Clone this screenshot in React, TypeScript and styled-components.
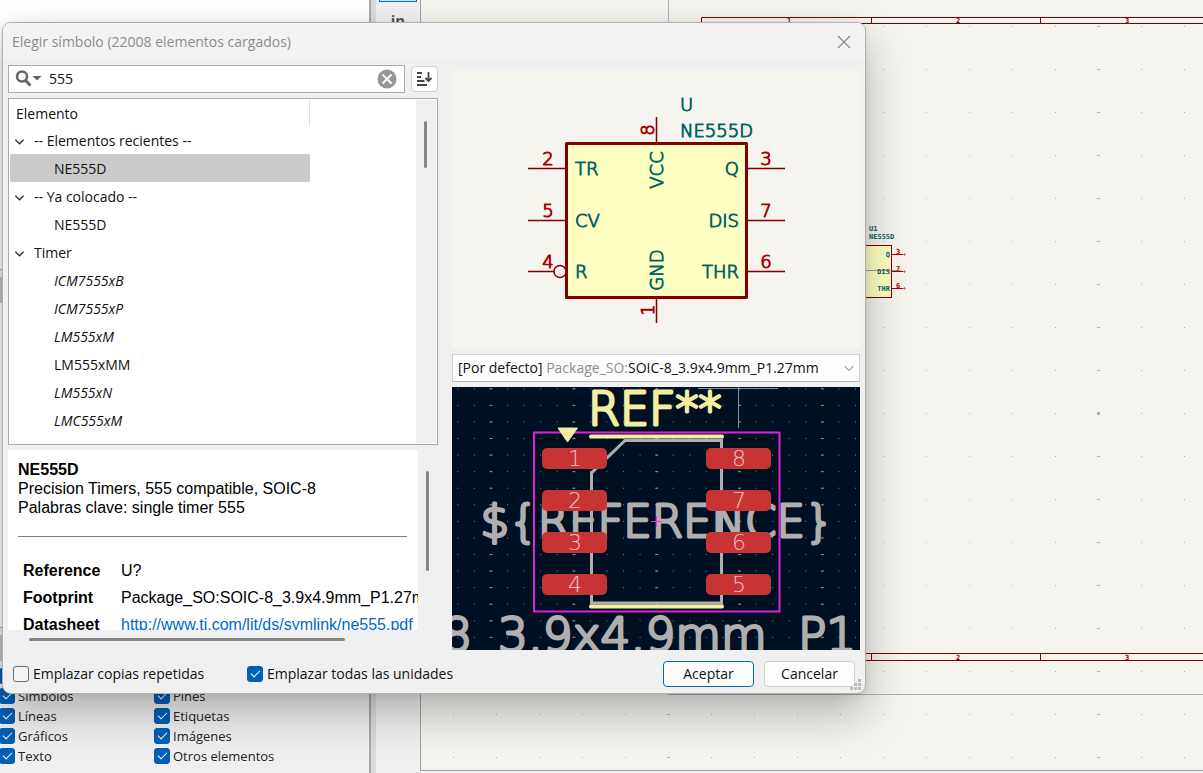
import React from "react";
import styled, { createGlobalStyle, css } from "styled-components";

const UI_FONT = '"Open Sans", "Noto Sans", sans-serif';
const STROKE_FONT = '"DejaVu Sans Light", "DejaVu Sans", sans-serif';

const GlobalStyle = createGlobalStyle`
  *, *::before, *::after { box-sizing: border-box; }
  body {
    margin: 0;
    overflow: hidden;
    background: #f0f0f0;
    font-family: ${UI_FONT};
    font-size: 14px;
    line-height: 20px;
    color: #111;
  }
  button, input, select { font: inherit; color: inherit; }
`;

/* ---------- Editor behind the dialog ---------- */

const Editor = styled.main`
  display: grid;
  grid-template-columns: 369px 7px 45px minmax(0, 1fr);
  height: 100vh;
`;

const SidePanel = styled.aside`
  display: flex;
  flex-direction: column;
  background: #f0f0f0;
`;

const PanelList = styled.div<{ $grow: number }>`
  flex: ${(p) => p.$grow} 1 0;
  background: #fff;
  border-bottom: 1px solid #a8a8a8;
`;

const PanelHeader = styled.div`
  height: 26px;
  margin-top: 7px;
  background: #c4c4c4;
`;

const FilterGrid = styled.div`
  display: grid;
  grid-template-columns: 155px 1fr;
  padding: 5px 0 7px;
  font-size: 13px;
`;

const FilterLabel = styled.label`
  display: flex;
  align-items: center;
  gap: 3px;
  height: 20px;
  margin-left: -1px;
  color: #222;
`;

const CheckBox = styled.input.attrs({ type: "checkbox" })`
  appearance: none;
  flex: none;
  width: 16px;
  height: 16px;
  margin: 0;
  border: 1px solid #6b6b6b;
  border-radius: 3px;
  background: #f5f5f5;

  &:checked {
    border-color: #005fb8;
    background: #005fb8;
  }

  &:checked::after {
    content: "";
    display: block;
    width: 9px;
    height: 5px;
    margin: 3px 0 0 3px;
    border: solid #fff;
    border-width: 0 0 1px 1px;
    transform: rotate(-45deg);
  }
`;

const Sash = styled.div`
  border-left: 2px solid #a9a9a9;
  background: #dcdcdc;
`;

const Toolbar = styled.div`
  display: flex;
  flex-direction: column;
  align-items: center;
  padding: 0 3px;
  border-right: 1px solid #a0a0a0;
  margin-bottom: 2px;
`;

const ToolButton = styled.button<{ $active?: boolean }>`
  width: 38px;
  height: ${(p) => (p.$active ? 2 : 28)}px;
  padding: 0;
  border: 0 solid #0078d4;
  background: transparent;
  font-size: 15px;
  font-weight: 700;
  color: #555;
  ${(p) =>
    p.$active
      ? css`
          border-width: 0 1px 1px;
          background: #cce4f7;
        `
      : css`
          margin-top: 4px;
        `}
`;

const Sheet = styled.svg`
  display: block;
  width: 100%;
  height: calc(100vh - 2px);
  background: #f5f4ef;
  border-bottom: 1px solid #a0a0a0;
`;

/* ---------- Dialog ---------- */

const Dialog = styled.section`
  position: absolute;
  top: 22px;
  left: 2px;
  display: flex;
  flex-direction: column;
  width: min(864px, calc(100vw - 4px));
  border: 1px solid #b0b0ae;
  border-radius: 9px;
  background: #f0f0f0;
  box-shadow: 0 20px 44px rgba(0, 0, 0, 0.27), 0 1px 8px rgba(0, 0, 0, 0.08);
`;

const TitleBar = styled.header`
  display: flex;
  align-items: center;
  justify-content: space-between;
  height: 37px;
  padding: 0 14px 0 9px;
  border-radius: 8px 8px 0 0;
  background: #f3f3f3;
`;

const Title = styled.h1`
  margin: 0;
  font-size: 14px;
  font-weight: 400;
  color: #8c8c8c;
`;

const PlainButton = styled.button`
  display: flex;
  padding: 0;
  border: 0;
  background: transparent;
`;

const Body = styled.div`
  display: grid;
  grid-template-columns: 430px minmax(0, 1fr);
  gap: 14px;
  padding: 5px 5px 0;
`;

const LeftColumn = styled.div`
  display: flex;
  flex-direction: column;
`;

const RightColumn = styled.div`
  display: flex;
  flex-direction: column;
  gap: 5px;
  padding-top: 5px;
`;

const SearchRow = styled.div`
  display: flex;
  align-items: center;
  gap: 6px;
`;

const SearchBox = styled.div`
  display: flex;
  flex: 1;
  align-items: center;
  height: 28px;
  padding: 0 7px 0 6px;
  border: 1px solid #a9a9b0;
  background: #fff;
`;

const SearchInput = styled.input`
  flex: 1;
  min-width: 0;
  margin: 0 8px 0 7px;
  padding: 0;
  border: 0;
  outline: 0;
  background: transparent;
`;

const SortButton = styled.button`
  display: flex;
  align-items: center;
  justify-content: center;
  width: 27px;
  height: 26px;
  padding: 0;
  border: 1px solid #d0d0d0;
  border-radius: 4px;
  background: #fdfdfd;
`;

const TreeBox = styled.div`
  display: flex;
  height: 347px;
  margin-top: 5px;
  padding: 1px;
  border: 1px solid #a9a9b0;
  background: #fff;
`;

const TreeContent = styled.div`
  flex: 1;
  min-width: 0;
`;

const TreeHeader = styled.div`
  width: 300px;
  height: 26px;
  padding: 4px 6px;
  border-right: 1px solid #e2e2e2;
`;

const Tree = styled.ul`
  margin: 0;
  padding: 0;
  list-style: none;
`;

const TreeRow = styled.li<{ $leaf?: boolean; $selected?: boolean; $italic?: boolean }>`
  display: flex;
  align-items: center;
  gap: 9px;
  width: 300px;
  height: 28px;
  padding: 2px 0 0 ${(p) => (p.$leaf ? 44 : 4)}px;
  border-radius: 2px;
  background: ${(p) => (p.$selected ? "#cbcbcb" : "transparent")};
  font-style: ${(p) => (p.$italic ? "italic" : "normal")};
`;

const TreeScroll = styled.div`
  width: 20px;
  padding: 21px 0 0 8px;
  background: #f0f0f0;
`;

const Thumb = styled.div<{ $w: number; $h: number }>`
  width: ${(p) => p.$w}px;
  height: ${(p) => p.$h}px;
  border-radius: 2px;
  background: #868686;
`;

const DetailsArea = styled.div`
  display: grid;
  grid-template-columns: 410px 20px;
  grid-template-rows: 180px 20px;
  margin-top: 5px;
`;

const Details = styled.div`
  overflow: hidden;
  padding: 10px 0 0 10px;
  background: #fff;
  font-family: "Liberation Sans", sans-serif;
  font-size: 16px;
  line-height: 19px;
  color: #000;
`;

const DetailLine = styled.p<{ $bold?: boolean }>`
  margin: 0;
  font-weight: ${(p) => (p.$bold ? 700 : 400)};
`;

const Rule = styled.hr`
  margin: 19px 11px 20px 0;
  border: 0;
  border-top: 1px solid #808080;
`;

const FieldTable = styled.table`
  margin-left: 5px;
  border-collapse: collapse;
  white-space: nowrap;

  th {
    min-width: 98px;
    padding: 0;
    text-align: left;
  }
  td {
    padding: 0;
  }
  tr {
    height: 27px;
  }
  a {
    color: #0066cc;
  }
`;

const VerticalScroll = styled.div`
  padding: 21px 0 0 8px;
`;

const HorizontalScroll = styled.div`
  padding: 8px 0 0 21px;
`;

const Preview = styled.svg`
  display: block;
  width: 100%;
  height: auto;
`;

const FootprintPicker = styled.label`
  position: relative;
  display: flex;
  align-items: center;
  justify-content: space-between;
  height: 28px;
  padding: 0 4px 0 5px;
  border: 1px solid #cfcfcf;
  border-bottom-color: #b8b8b8;
  background: #fdfdfd;
  white-space: nowrap;
`;

const Muted = styled.span`
  color: #8c8c8c;
`;

const HiddenSelect = styled.select`
  position: absolute;
  inset: 0;
  width: 100%;
  opacity: 0;
`;

const Footer = styled.footer`
  display: flex;
  align-items: center;
  height: 43px;
  padding: 0 10px;
`;

const OptionLabel = styled.label<{ $w?: number }>`
  display: flex;
  align-items: center;
  gap: 4px;
  width: ${(p) => (p.$w ? `${p.$w}px` : "auto")};
  padding-top: 5px;
`;

const Actions = styled.div`
  display: flex;
  gap: 10px;
  margin-left: auto;
  padding-top: 4px;
`;

const DialogButton = styled.button<{ $primary?: boolean }>`
  width: 91px;
  height: 26px;
  padding: 0;
  border: 1px solid ${(p) => (p.$primary ? "#0067c0" : "#d0d0d0")};
  border-radius: 4px;
  background: #fdfdfd;
`;

const Grip = styled.svg`
  position: absolute;
  right: 3px;
  bottom: 2px;
`;

/* ---------- Data ---------- */

const filters = ["Símbolos", "Pines", "Líneas", "Etiquetas", "Gráficos", "Imágenes", "Texto", "Otros elementos"];

type Row = { label: string; leaf?: boolean; selected?: boolean; italic?: boolean };
const rows: Row[] = [
  { label: "-- Elementos recientes --" },
  { label: "NE555D", leaf: true, selected: true },
  { label: "-- Ya colocado --" },
  { label: "NE555D", leaf: true },
  { label: "Timer" },
  { label: "ICM7555xB", leaf: true, italic: true },
  { label: "ICM7555xP", leaf: true, italic: true },
  { label: "LM555xM", leaf: true, italic: true },
  { label: "LM555xMM", leaf: true },
  { label: "LM555xN", leaf: true, italic: true },
  { label: "LMC555xM", leaf: true, italic: true },
];

const leftPins = [
  { num: "2", name: "TR", y: 98 },
  { num: "5", name: "CV", y: 150 },
  { num: "4", name: "R", y: 201 },
];
const rightPins = [
  { num: "3", name: "Q", y: 98 },
  { num: "7", name: "DIS", y: 150 },
  { num: "6", name: "THR", y: 201 },
];

/* ---------- Drawings ---------- */

const StrokeText = styled.text<{ $size: number; $weight: number }>`
  font-family: ${STROKE_FONT};
  font-weight: 200;
  font-size: ${(p) => p.$size}px;
  stroke: currentColor;
  fill: currentColor;
  stroke-width: ${(p) => p.$weight}px;
  stroke-linejoin: round;
  stroke-linecap: round;
`;

const TinyText = styled.text`
  font-family: "DejaVu Sans Mono", monospace;
  font-weight: 700;
  font-size: 7px;
`;

function SchematicSheet() {
  return (
    <Sheet aria-label="Hoja de esquema">
      <defs>
        <pattern id="sheetGrid" x="32" y="26" width="43" height="43" patternUnits="userSpaceOnUse">
          <rect width="1" height="1" fill="#b0b0aa" />
        </pattern>
        <pattern id="sheetMajor" x="246" y="26" width="430" height="43" patternUnits="userSpaceOnUse">
          <rect width="3" height="1" fill="#b0b0aa" />
        </pattern>
      </defs>
      <rect width="100%" height="100%" fill="url(#sheetGrid)" />
      <rect width="100%" height="100%" fill="url(#sheetMajor)" />
      <rect x="676" y="412" width="3" height="3" fill="#b0b0aa" />
      <path d="M247.500 0V694.500H2000" fill="none" stroke="#b0b0ae" />
      <path
        d="M2000 17.500H280.500V660.500H2000M2000 23.500H286.500V653.500H2000M450.500 17v6M619.500 17v6M450.500 653v7M619.500 653v7"
        fill="none"
        stroke="#840000"
      />
      {[17, 654].map((y) =>
        ["1", "2", "3"].map((n, i) => (
          <TinyText key={n + y} x={368 + i * 169} y={y + 6} textAnchor="middle" fill="#840000">
            {n}
          </TinyText>
        )),
      )}
      <rect x="379" y="245.500" width="91.500" height="52" fill="#ffffc2" stroke="#840000" />
      <path d="M471 254.500h13M471 271.500h13M471 288.500h13" stroke="#a90000" />
      <path d="M482 254.500h3M483.500 253v3M482 271.500h3M483.500 270v3M482 288.500h3M483.500 287v3" stroke="#c88080" />
      <g fill="#006464">
        <TinyText x="448" y="231">U1</TinyText>
        <TinyText x="448" y="239">NE555D</TinyText>
        <TinyText x="469" y="257" textAnchor="end">Q</TinyText>
        <TinyText x="469" y="274" textAnchor="end">DIS</TinyText>
        <TinyText x="469" y="291" textAnchor="end">THR</TinyText>
      </g>
      <g fill="#a90000">
        <TinyText x="475" y="254">3</TinyText>
        <TinyText x="475" y="271">7</TinyText>
        <TinyText x="475" y="288">6</TinyText>
      </g>
      <path d="M440 270.500h40" stroke="#606060" strokeOpacity="0.6" />
    </Sheet>
  );
}

function SymbolPreview() {
  return (
    <Preview viewBox="0 0 408 279" role="img" aria-label="NE555D">
      <rect width="408" height="279" fill="#f5f4ef" />
      <g stroke="#840000" strokeWidth="1.500">
        <path d="M204.500 47V74M204.500 227V253" />
        {leftPins.map((p) => (
          <path key={p.num} d={`M76 ${p.y + 0.5}H${p.num === "4" ? 102 : 115}`} />
        ))}
        {rightPins.map((p) => (
          <path key={p.num} d={`M294 ${p.y + 0.5}H333`} />
        ))}
      </g>
      <rect
        x="114.500"
        y="73.500"
        width="180"
        height="154"
        fill="#ffffc2"
        stroke="#840000"
        strokeWidth="3"
        strokeLinejoin="round"
      />
      <circle cx="108" cy="201.500" r="6" fill="#f5f4ef" stroke="#840000" strokeWidth="1.500" />
      <g style={{ color: "#a90000" }}>
        {leftPins.map((p) => (
          <StrokeText key={p.num} $size={18} $weight={1} x="96" y={p.y - 3} textAnchor="middle">
            {p.num}
          </StrokeText>
        ))}
        {rightPins.map((p) => (
          <StrokeText key={p.num} $size={18} $weight={1} x="314" y={p.y - 3} textAnchor="middle">
            {p.num}
          </StrokeText>
        ))}
        <StrokeText $size={18} $weight={1} transform="translate(202 60) rotate(-90)" textAnchor="middle">
          8
        </StrokeText>
        <StrokeText $size={18} $weight={1} transform="translate(202 240) rotate(-90)" textAnchor="middle">
          1
        </StrokeText>
      </g>
      <g style={{ color: "#006464" }}>
        {leftPins.map((p) => (
          <StrokeText key={p.num} $size={18} $weight={1} x="123" y={p.y + 7}>
            {p.name}
          </StrokeText>
        ))}
        {rightPins.map((p) => (
          <StrokeText key={p.num} $size={18} $weight={1} x="287" y={p.y + 7} textAnchor="end">
            {p.name}
          </StrokeText>
        ))}
        <StrokeText $size={18} $weight={1} x="228" y="41">U</StrokeText>
        <StrokeText $size={18} $weight={1} x="228" y="67">NE555D</StrokeText>
        <StrokeText $size={18} $weight={1} transform="translate(211 100) rotate(-90)" textAnchor="middle">
          VCC
        </StrokeText>
        <StrokeText $size={18} $weight={1} transform="translate(211 200) rotate(-90)" textAnchor="middle">
          GND
        </StrokeText>
      </g>
    </Preview>
  );
}

function FootprintPreview() {
  const pads = [0, 1, 2, 3];
  return (
    <Preview viewBox="0 0 408 263" role="img" aria-label="SOIC-8_3.9x4.9mm_P1.27mm">
      <defs>
        <pattern id="fpGrid" x="5.300" y="1.300" width="16.570" height="16.570" patternUnits="userSpaceOnUse">
          <rect width="1" height="1" fill="#7b838b" />
        </pattern>
        <pattern id="fpMajor" x="37.500" y="1.300" width="82.850" height="16.570" patternUnits="userSpaceOnUse">
          <rect width="3" height="1" fill="#8a9096" />
        </pattern>
      </defs>
      <rect width="408" height="263" fill="#001023" />
      <rect width="408" height="263" fill="url(#fpGrid)" />
      <rect width="408" height="263" fill="url(#fpMajor)" />
      <g style={{ color: "#afafaf" }}>
        <StrokeText $size={45} $weight={3} x="205" y="150" textAnchor="middle">
          {"${REFERENCE}"}
        </StrokeText>
        <StrokeText $size={47} $weight={3} y="264">
          <tspan x="-10">8</tspan>
          <tspan x="46">3.9x4.9mm</tspan>
          <tspan x="346">P1</tspan>
        </StrokeText>
      </g>
      <path d="M269.500 53.500H173L139.500 86V216H269.500Z" fill="none" stroke="#afafaf" strokeWidth="3" />
      <path d="M139 49.500H270M139 219.500H270" stroke="#f2eda1" strokeWidth="4" strokeLinecap="round" />
      <path d="M246 1.500H326M286.500 0V41" stroke="#8a9096" />
      <g style={{ color: "#f2eda1" }}>
        <StrokeText $size={46} $weight={3} x="136" y="38">REF**</StrokeText>
      </g>
      <rect x="82" y="45.500" width="245.500" height="179" fill="none" stroke="#e120d6" strokeWidth="2" />
      <path d="M106 41H125.500L115.500 55Z" fill="#f2eda1" stroke="#f2eda1" strokeLinejoin="round" />
      {pads.map((i) => (
        <g key={i}>
          <rect x="90" y={61 + i * 42} width="65" height="21" rx="5" fill="#c83434" />
          <rect x="254" y={61 + i * 42} width="65" height="21" rx="5" fill="#c83434" />
          <g style={{ color: "#f1c0c4" }}>
            <StrokeText $size={22} $weight={0} x="123" y={79 + i * 42} textAnchor="middle">
              {i + 1}
            </StrokeText>
            <StrokeText $size={22} $weight={0} x="287" y={79 + i * 42} textAnchor="middle">
              {8 - i}
            </StrokeText>
          </g>
        </g>
      ))}
      <path d="M199 134.500H210M204.500 129V140" stroke="#ff26e2" />
    </Preview>
  );
}

function Chevron({ size, light }: { size: number; light?: boolean }) {
  return (
    <svg width={size} height={size} viewBox="0 0 12 12" fill="none" aria-hidden="true">
      <path d="M1.500 4L6 8.500L10.500 4" stroke={light ? "#666" : "#333"} strokeWidth={light ? 1 : 1.5} />
    </svg>
  );
}

function FilterSection() {
  return (
    <FilterGrid>
      <FilterLabel>
        <CheckBox defaultChecked aria-label="Todos los elementos" />
      </FilterLabel>
      <span />
      {filters.map((f) => (
        <FilterLabel key={f}>
          <CheckBox defaultChecked />
          {f}
        </FilterLabel>
      ))}
    </FilterGrid>
  );
}

export default function App() {
  return (
    <>
      <GlobalStyle />
      <Editor>
        <SidePanel>
          <PanelList $grow={270} />
          <PanelHeader />
          <PanelList $grow={325} />
          <PanelHeader />
          <FilterSection />
        </SidePanel>
        <Sash />
        <Toolbar>
          <ToolButton $active aria-label="Cuadrícula" />
          <ToolButton>in</ToolButton>
        </Toolbar>
        <SchematicSheet />
      </Editor>

      <Dialog role="dialog" aria-labelledby="chooser-title">
        <TitleBar>
          <Title id="chooser-title">Elegir símbolo (22008 elementos cargados)</Title>
          <PlainButton aria-label="Cerrar">
            <svg width="14" height="14" viewBox="0 0 14 14" fill="none">
              <path d="M1 1L13 13M13 1L1 13" stroke="#8a8a8a" strokeWidth="1.200" />
            </svg>
          </PlainButton>
        </TitleBar>

        <Body>
          <LeftColumn>
            <SearchRow>
              <SearchBox>
                <PlainButton aria-label="Opciones de búsqueda">
                  <svg width="27" height="18" viewBox="0 0 27 18" fill="none">
                    <circle cx="7" cy="6.500" r="5" stroke="#666" strokeWidth="2.500" />
                    <path d="M10.500 10.500L15.500 15.500" stroke="#666" strokeWidth="3" />
                    <path d="M17.500 6H26.500L22 10.500Z" fill="#666" />
                  </svg>
                </PlainButton>
                <SearchInput defaultValue="555" aria-label="Filtro" />
                <PlainButton aria-label="Borrar">
                  <svg width="20" height="20" viewBox="0 0 20 20" fill="none">
                    <circle cx="10" cy="10" r="9.500" fill="#969696" />
                    <path d="M5.500 5.500L14.500 14.500M14.500 5.500L5.500 14.500" stroke="#fff" strokeWidth="2" />
                  </svg>
                </PlainButton>
              </SearchBox>
              <SortButton aria-label="Ordenar">
                <svg width="17" height="16" viewBox="0 0 17 16" fill="none" stroke="#454545">
                  <path d="M1 2H6M1 6H5M1 10H8.500M1 14H11" strokeWidth="1.800" />
                  <path d="M12.500 1V10M9.500 7L12.500 10L15.500 7" strokeWidth="1.800" />
                </svg>
              </SortButton>
            </SearchRow>

            <TreeBox>
              <TreeContent>
                <TreeHeader>Elemento</TreeHeader>
                <Tree role="tree">
                  {rows.map((row, i) => (
                    <TreeRow
                      key={i}
                      role="treeitem"
                      aria-selected={!!row.selected}
                      $leaf={row.leaf}
                      $selected={row.selected}
                      $italic={row.italic}
                    >
                      {!row.leaf && <Chevron size={11} />}
                      <span>{row.label}</span>
                    </TreeRow>
                  ))}
                </Tree>
              </TreeContent>
              <TreeScroll>
                <Thumb $w={3} $h={47} />
              </TreeScroll>
            </TreeBox>

            <DetailsArea>
              <Details>
                <DetailLine $bold>NE555D</DetailLine>
                <DetailLine>Precision Timers, 555 compatible, SOIC-8</DetailLine>
                <DetailLine>Palabras clave: single timer 555</DetailLine>
                <Rule />
                <FieldTable>
                  <tbody>
                    <tr>
                      <th scope="row">Reference</th>
                      <td>U?</td>
                    </tr>
                    <tr>
                      <th scope="row">Footprint</th>
                      <td>Package_SO:SOIC-8_3.9x4.9mm_P1.27mm</td>
                    </tr>
                    <tr>
                      <th scope="row">Datasheet</th>
                      <td>
                        <a href="http://www.ti.com/lit/ds/symlink/ne555.pdf">
                          http://www.ti.com/lit/ds/symlink/ne555.pdf
                        </a>
                      </td>
                    </tr>
                  </tbody>
                </FieldTable>
              </Details>
              <VerticalScroll>
                <Thumb $w={3} $h={100} />
              </VerticalScroll>
              <HorizontalScroll>
                <Thumb $w={316} $h={3} />
              </HorizontalScroll>
            </DetailsArea>
          </LeftColumn>

          <RightColumn>
            <SymbolPreview />
            <FootprintPicker>
              <span aria-hidden="true">
                [Por defecto] <Muted>Package_SO:</Muted>SOIC-8_3.9x4.9mm_P1.27mm
              </span>
              <Chevron size={12} light />
              <HiddenSelect aria-label="Huella">
                <option>Package_SO:SOIC-8_3.9x4.9mm_P1.27mm</option>
              </HiddenSelect>
            </FootprintPicker>
            <FootprintPreview />
          </RightColumn>
        </Body>

        <Footer>
          <OptionLabel $w={234}>
            <CheckBox />
            Emplazar copias repetidas
          </OptionLabel>
          <OptionLabel>
            <CheckBox defaultChecked />
            Emplazar todas las unidades
          </OptionLabel>
          <Actions>
            <DialogButton $primary>Aceptar</DialogButton>
            <DialogButton>Cancelar</DialogButton>
          </Actions>
        </Footer>
        <Grip width="12" height="12" viewBox="0 0 12 12" fill="#bdbdbd" aria-hidden="true">
          <path d="M8 0h3v3h-3zM4 4h3v3h-3zM8 4h3v3h-3zM0 8h3v3h-3zM4 8h3v3h-3zM8 8h3v3h-3z" />
        </Grip>
      </Dialog>
    </>
  );
}
